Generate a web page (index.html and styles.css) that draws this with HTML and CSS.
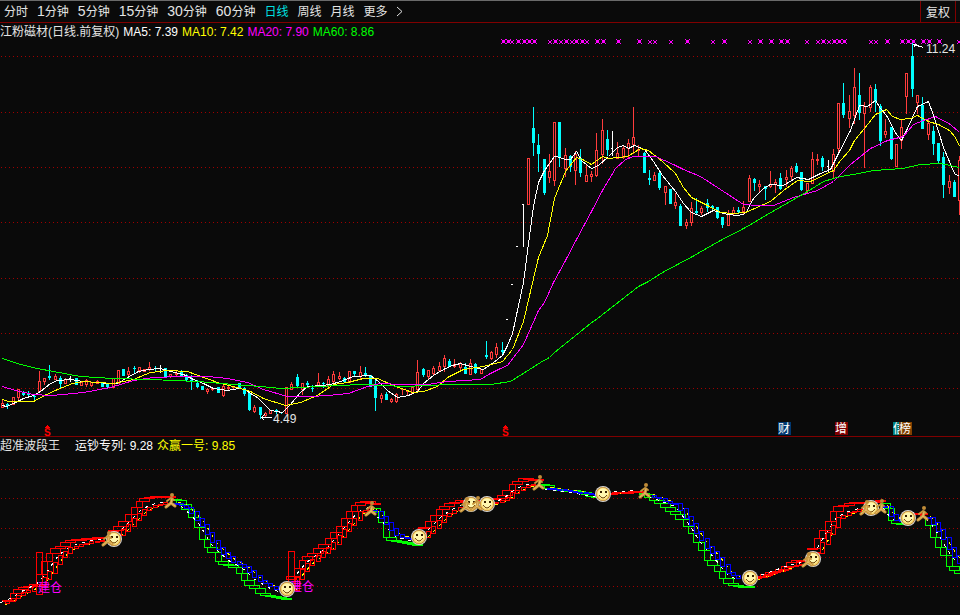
FILE: index.html
```html
<!DOCTYPE html>
<html lang="zh">
  <head>
    <meta charset="utf-8">
    <title>江粉磁材 日线</title>
    <link rel="stylesheet" href="styles.css">
  </head>
  <body>
    <header class="toolbar">
      <nav class="periods">
        <button>分时</button>
        <button><span class="num">1</span>分钟</button>
        <button><span class="num">5</span>分钟</button>
        <button><span class="num">15</span>分钟</button>
        <button><span class="num">30</span>分钟</button>
        <button><span class="num">60</span>分钟</button>
        <button class="active">日线</button>
        <button>周线</button>
        <button>月线</button>
        <button>更多</button>
        <button class="more" aria-label="展开"><svg width="7" height="11" viewBox="0 0 7 11"><path d="M1 1l5 4.500l-5 4.500"/></svg></button>
      </nav>
      <button class="adjust">复权</button>
    </header>

    <section class="panel main">
      <div class="legend">
        <span>江粉磁材(日线.前复权)</span>
        <span class="ma5">MA5: 7.39</span>
        <span class="ma10">MA10: 7.42</span>
        <span class="ma20">MA20: 7.90</span>
        <span class="ma60">MA60: 8.86</span>
      </div>
      <svg class="chart" id="price" viewBox="0 39 960 397" role="img" aria-label="日线"></svg>
    </section>

    <section class="panel">
      <div class="legend">
        <span class="title">超准波段王</span>
        <span class="ma5">运钞专列: 9.28</span>
        <span class="ma10">众赢一号: 9.85</span>
      </div>
      <svg class="chart" id="wave" viewBox="0 453 960 162" role="img" aria-label="超准波段王"></svg>
    </section>

    <script src="chart.js"></script>
  </body>
</html>
```
FILE: styles.css
```css
* {
    box-sizing: border-box;
}
body {
    margin: 0;
    background: #0a0a0a;
    color: #e4e4e4;
    font-family: "Liberation Sans", "Noto Sans CJK SC", sans-serif;
    font-size: 12px;
    overflow-x: hidden;
}
button {
    background: none;
    border: 0;
    padding: 0;
    color: inherit;
    font: inherit;
    white-space: nowrap;
    cursor: pointer;
}
.toolbar {
    display: flex;
    justify-content: space-between;
    height: 23px;
    border-top: 1px solid #6a6a6a;
    border-bottom: 1px solid #800000;
}
.periods {
    display: flex;
    align-items: center;
    gap: 9px;
    padding-left: 4px;
}
.periods button {
    line-height: 20px;
}
.num {
    font-size: 14px;
}
.active {
    color: #00e0e0;
}
.more svg {
    display: block;
    fill: none;
    stroke: #e4e4e4;
}
.adjust {
    width: 36px;
    margin-right: 4px;
    border-left: 1px solid #800000;
    border-right: 1px solid #800000;
}
.main {
    border-bottom: 1px solid #800000;
}
.legend {
    display: flex;
    gap: 4px;
    height: 16px;
    line-height: 18px;
    white-space: nowrap;
}
.title {
    margin-right: 11px;
}
.chart {
    display: block;
    width: 100%;
    height: auto;
    overflow: visible;
}
.ma5 { color: #ffffff; }
.ma10 { color: #ffff00; }
.ma20 { color: #ff00ff; }
.ma60 { color: #00ff00; }

.grid {
    stroke: #a00000;
    stroke-dasharray: 1 3;
}
.line {
    fill: none;
    stroke: currentColor;
    stroke-width: 1;
    shape-rendering: crispEdges;
}
.dash {
    stroke-dasharray: 3 5;
}
.up { color: #ff3c3c; }
.down { color: #00ffff; }
.flat { color: #ffffff; }
.wick, .solid, .mark {
    fill: currentColor;
    shape-rendering: crispEdges;
}
.hollow {
    fill: #0a0a0a;
    stroke: currentColor;
    shape-rendering: crispEdges;
}
.red { color: #ff0000; }
.green { color: #00ff00; }
.blue { color: #0000ff; }
.label {
    fill: currentColor;
}
.dividend {
    fill: #ff0000;
    font-size: 10px;
    font-weight: bold;
}
.runner {
    fill: none;
    stroke: #c8963c;
    stroke-width: 3;
    stroke-linecap: round;
    stroke-linejoin: round;
}
.runner .shade {
    stroke: #e8bc6c;
    stroke-width: 1;
}
.runner circle {
    fill: #c08c38;
    stroke: none;
}
```
FILE: chart.js
```js
const NS = "http://www.w3.org/2000/svg";

function add(parent, tag, attrs, text){
    const el = document.createElementNS(NS, tag);
    for (const key in attrs) el.setAttribute(key, attrs[key]);
    if (text) el.textContent = text;
    parent.appendChild(el);
    return el;
}

// centre of bar i
function barX(i){
    return Math.floor(2.6 + 5.258 * i);
}

function grid(svg, rows){
    for (const y of rows) add(svg, "line", {class: "grid", x1: 1, x2: 960, y1: y + .5, y2: y + .5});
}

function line(svg, cls, points){
    const p = points.split(" ").map(s => s.split(",").map(v => +v + .5).join(",")).join(" ");
    return add(svg, "polyline", {class: "line " + cls, points: p});
}

// bars: high,open/close top,open/close bottom,low + u (up) d (down) f (flat)
const bars = `399,403,407,407u 403,404,405,408d 397,397,404,404u 389,389,397,400u 391,392,394,395d 391,394,394,395d 394,396,396,399d 371,381,391,391u 378,378,381,384u 365,376,377,379d
374,376,379,379u 376,378,383,387d 378,379,383,383u 376,378,378,381f 378,378,384,384d 382,382,385,385u 379,380,384,386u 382,382,385,386u 380,381,383,383u 382,382,386,386d
383,384,386,387d 378,378,387,387u 370,370,383,383u 369,369,375,375d 367,371,374,376u 366,368,368,372d 367,367,370,372u 369,369,371,371u 362,367,369,370u 366,368,368,371d
365,368,368,372f 368,368,376,376d 374,374,376,377u 371,373,374,376u 370,372,375,376d 374,375,379,381d 375,380,381,389d 380,383,386,387d 386,386,389,389d 388,389,391,393u
388,388,389,390u 387,387,392,392d 383,386,395,396u 385,387,388,389u 386,386,387,388u 383,383,387,388d 387,388,393,395d 393,393,409,410d 405,407,411,412u 407,407,414,418d
412,413,415,416u 410,410,413,413u 409,410,411,413d 412,412,412,413d 387,387,413,413u 382,384,389,389u 374,377,385,387d 383,383,389,394u 381,383,384,386d 385,388,388,391d
373,382,385,385u 382,383,383,387d 376,379,385,387u 371,374,381,382u 372,376,378,379u 377,378,381,381d 371,371,382,382u 371,371,373,375d 366,372,376,378u 367,373,375,376d
375,375,386,386d 380,386,397,410d 393,395,398,402u 392,394,399,399d 398,399,401,402u 393,394,401,402u 389,389,389,394u 390,391,391,395u 387,387,393,393u 360,372,389,390u
368,369,374,376d 370,370,376,379u 366,368,373,374u 362,366,370,371u 355,358,366,371u 359,361,366,366d 359,364,366,367u 362,363,367,369u 363,367,373,373d 359,363,374,374u
363,364,372,373d 369,369,373,373u 341,355,356,358d 351,352,358,359u 343,347,354,357u 342,350,351,353d 319,319,319,319f 284,284,284,284f 246,246,246,246f 204,204,204,246f
158,158,204,204u 107,128,142,155d 134,145,153,171d 159,159,192,194d 154,171,177,182u 122,122,180,185u 122,122,156,166d 148,155,168,176u 155,156,166,171d 151,154,170,184u
149,158,172,176d 165,175,181,181u 171,174,176,181u 133,150,175,176u 119,130,154,163u 130,139,149,155d 131,148,148,155f 142,153,158,158u 145,148,157,158u 139,143,148,157u
107,137,144,153u 145,149,150,155u 152,153,172,172d 170,178,179,184d 172,175,180,180u 172,173,187,189d 186,186,192,204u 189,189,203,203d 193,202,205,208u 204,206,225,225d
219,222,225,228u 202,208,222,225u 198,211,212,213d 206,208,212,214u 199,203,207,211d 205,206,207,210d 207,207,217,218d 217,217,224,227d 210,213,225,225u 207,210,213,214u
207,210,211,212d 201,207,211,213u 175,178,201,201u 178,179,182,190d 180,184,186,192u 186,186,188,199d 171,184,186,187u 179,182,184,192u 173,178,188,189d 170,177,179,186u
166,168,176,180u 163,166,171,172d 172,172,189,190d 183,183,190,193u 152,159,183,183u 154,159,160,164u 156,158,166,170d 160,166,166,172f 149,154,171,178u 103,103,148,153u
83,103,114,117d 95,111,118,127u 68,87,115,123u 73,95,112,119d 102,106,113,167u 85,87,107,111u 84,89,101,111d 104,106,140,145d 119,131,134,137u 127,127,158,159d
144,144,166,166u 120,127,140,148u 73,73,96,113u 43,56,88,96d 95,95,102,113u 97,105,128,128d 118,123,134,139u 126,131,143,154d 143,143,160,163d 152,157,184,197d
175,181,187,193u 180,182,196,196d 156,160,200,214u`.split(/\s+/);

const ma5 = "2,405 6,406 13,403 23,398 33,395 40,391 50,383 57,380 70,379 83,381 97,382 107,383 117,383 127,377 138,371 148,369 160,368 170,371 183,374 193,379 203,383 213,388 227,390 238,388 245,389 250,393 257,397 270,410 282,412 290,404 300,392 307,386 322,385 330,384 340,381 353,376 370,375 378,381 387,390 397,397 408,395 417,391 423,383 433,375 443,369 452,365 460,363 470,366 483,369 493,362 502,355 507,345 512,333 523,282 528,243 533,206 538,182 544,170 554,156 556,156 565,159 570,159 576,151 582,161 591,168 598,165 608,156 617,147 623,145 628,148 634,145 644,149 653,161 662,175 675,191 683,203 691,212 701,216 713,210 720,212 727,214 738,215 745,213 753,198 763,188 770,184 783,185 796,177 808,179 820,173 830,169 838,153 850,130 859,105 867,106 875,100 880,108 886,115 896,134 901,140 907,128 917,106 928,101 933,115 943,147 954,173 959,176";
const ma10 = "2,399 8,401 33,401 44,395 57,389 72,383 83,381 113,383 133,379 150,372 167,370 187,371 203,377 220,383 237,387 250,391 263,398 285,405 300,402 317,395 333,384 347,382 363,378 377,378 393,385 412,392 423,391 437,386 447,377 463,369 483,366 502,361 512,349 523,321 533,278 538,257 547,235 554,198 565,171 576,157 582,159 591,164 602,156 608,158 627,156 640,148 648,150 662,161 675,173 683,187 691,197 707,205 720,212 732,213 745,212 770,201 783,190 797,180 810,181 833,170 840,160 849,150 854,140 864,128 875,114 886,109 892,116 900,119 910,118 917,115 928,121 938,124 949,130 955,137 959,146";
const ma20 = "2,386 15,390 33,394 50,395 63,394 83,392 110,387 133,380 153,377 180,376 207,376 227,378 247,382 263,389 287,396 310,396 327,395 348,393 367,386 380,383 400,384 427,384 447,381 480,379 490,373 498,369 507,365 523,344 538,310 544,302 553,282 565,260 576,239 591,211 602,190 615,168 625,159 633,156 655,156 673,164 683,169 700,176 720,189 743,204 757,205 773,205 793,197 817,190 833,181 850,164 870,148 887,140 903,136 913,124 923,120 935,116 950,124 959,132";
const ma60 = "2,358 20,364 37,368 53,371 80,376 113,378 150,379 197,381 233,384 260,386 280,388 300,387 337,385 363,384 403,386 450,384 490,384 510,381 529,369 540,362 549,357 554,352 590,323 597,318 638,286 648,281 662,272 692,256 720,240 745,227 767,214 807,191 823,181 840,176 853,174 873,170 902,168 920,164 940,163 959,167";

function drawBars(svg){
    bars.forEach((bar, i) => {
        const [high, top, bottom, low] = bar.slice(0, -1).split(",").map(Number);
        const kind = {u: "up", d: "down", f: "flat"}[bar.slice(-1)];
        const x = barX(i);
        const g = add(svg, "g", {class: kind});
        add(g, "rect", {class: "wick", x: x, y: high, width: 1, height: low - high + 1});
        if (kind == "up" && bottom - top > 1)
            add(g, "rect", {class: "hollow", x: x - .5, y: top + .5, width: 2, height: bottom - top});
        else if (kind == "flat")
            add(g, "rect", {class: "solid", x: x - 1, y: top, width: 2, height: 1});
        else
            add(g, "rect", {class: "solid", x: x - 1, y: top, width: 3, height: bottom - top + 1});
    });
}

// crosses along the top edge, the strong ones have a filled centre
function drawCrosses(svg){
    const strong = [503, 508, 518, 524, 529, 534, 555, 566, 576, 582, 597, 603, 618, 639, 687, 724, 760, 771, 781, 787, 823, 834, 839, 844, 887, 902, 908, 913, 923, 929, 939];
    const weak = [512, 550, 561, 572, 587, 650, 655, 671, 713, 750, 807, 818, 829, 871, 876, 959];
    const dot = (x, y, w, h) => add(svg, "rect", {class: "mark ma20", x: x, y: y, width: w, height: h});
    for (const x of strong){
        for (const y of [39, 43]){
            dot(x - 2, y, 1, 1);
            dot(x + 2, y, 1, 1);
        }
        dot(x - 1, 40, 3, 3);
    }
    for (const x of weak){
        for (const y of [40, 43]){
            dot(x - 2, y, 1, 1);
            dot(x + 1, y, 1, 1);
        }
        dot(x - 1, 41, 2, 2);
    }
}

function badge(svg, x, color, text){
    add(svg, "rect", {x: x, y: 422, width: 13, height: 13, fill: color});
    add(svg, "text", {class: "label flat", x: x, y: 433}, text);
}

function dividend(svg, x){
    add(svg, "text", {class: "dividend", x: x - 3, y: 436}, "S");
    add(svg, "path", {class: "mark red", d: `M${x - 2} 428v-1h1v-1h1v-1h1v1h1v1h1v1z`});
}

const price = document.getElementById("price");
grid(price, [56, 112, 167, 222, 278, 333, 388]);
drawBars(price);
line(price, "ma5", ma5);
line(price, "ma10", ma10);
line(price, "ma20", ma20);
line(price, "ma60", ma60);
drawCrosses(price);
line(price, "flat", "271,417 261,417 264,414");
line(price, "flat", "261,417 264,420");
line(price, "flat", "923,47 913,44 916,44");
line(price, "flat", "913,44 915,47");
add(price, "text", {class: "label", x: 273, y: 423}, "4.49");
add(price, "text", {class: "label", x: 926, y: 53}, "11.24");
dividend(price, 47);
dividend(price, 505);
badge(price, 778, "#003870", "财");
badge(price, 835, "#800000", "增");
badge(price, 893, "#008080", "信");
badge(price, 899, "#804000", "榜");

// wave legs: outer and inner curve of each leg
const legs = [
    ["red", "2,601 8,600 14,592 20,588 30,586 36,583 42,565 46,557 52,549 60,546 66,541 75,539 90,538 103,537",
        "2,603 10,600 18,595 25,591 33,587 40,583 47,575 52,567 60,556 70,548 80,544 93,541 103,540"],
    ["red", "112,531 117,527 121,523 125,518 131,510 138,502 145,497 155,496 171,496",
        "117,535 123,530 133,520 143,510 153,505 167,502"],
    ["green", "172,499 178,501 185,507 190,516 195,522 200,535 205,545 211,550 216,560 222,564 232,566 237,570 242,577 247,584 253,587 258,592 263,595 275,597 285,599",
        "175,503 183,505 192,513 200,522 207,533 213,543 222,552 230,559 238,563 247,569 255,577 263,582 272,587 280,590"],
    ["red", "287,579 295,572 300,562 305,557 312,553 318,548 325,542 332,533 338,527 345,517 352,507 358,502 367,501 373,504",
        "292,589 295,583 298,575 308,563 320,554 330,547 340,535 350,523 360,512 372,507"],
    ["green", "372,508 378,514 382,525 384,535 390,540 400,542 415,544",
        "373,510 382,518 390,528 397,535 407,538 415,540"],
    ["red", "422,528 430,518 438,510 447,504 460,500 474,500",
        "424,536 427,533 433,527 443,517 453,510 463,506"],
    ["red", "492,499 497,498 502,495 507,490 513,483 523,478 533,479 540,481",
        "492,503 497,502 505,499 512,493 522,487 533,484"],
    ["green", "543,484 550,489 577,491 590,496 597,497", "547,488 567,490 583,493 597,495"],
    ["red", "608,493 640,491", "608,493 640,491"],
    ["green", "642,493 650,498 660,503 667,509 677,515 682,522 688,528 695,540 703,553 708,562 715,568 722,578 728,583 737,586 750,587",
        "650,495 663,500 677,505 683,513 692,525 700,538 707,547 712,552 720,562 728,572 740,579"],
    ["red", "755,577 767,573 777,570 787,566 793,560 803,560", "755,578 773,572 787,567 803,563"],
    ["red", "811,549 815,543 818,535 825,527 830,517 835,507 843,505 853,502 863,502 882,500",
        "815,555 817,552 822,543 830,530 838,518 847,513 860,509 868,507"],
    ["green", "882,503 887,512 892,522 900,523", "884,506 887,510 893,517 901,521"],
    ["red", "912,514 920,513", "912,513 920,514"],
    ["green", "925,518 929,527 933,537 938,547 945,558 950,568 960,573",
        "927,517 933,523 940,533 948,547 957,560 960,563"],
];

function parse(curve){
    return curve.split(" ").map(p => p.split(",").map(Number));
}

function valueAt(pts, x){
    for (let k = 1; k < pts.length; k++){
        const [x0, y0] = pts[k - 1], [x1, y1] = pts[k];
        if (x <= x1) return Math.round(y0 + (y1 - y0) * Math.max(0, x - x0) / (x1 - x0));
    }
    return pts[pts.length - 1][1];
}

// one box per bar, from the last value to this one
function boxes(svg, cls, pts, wide){
    for (let i = 1; i < 184; i++){
        const x = barX(i);
        if (x <= pts[0][0] || x > pts[pts.length - 1][0] + 2) continue;
        const a = valueAt(pts, barX(i - 1)), b = valueAt(pts, x);
        let h = Math.abs(a - b);
        let y = Math.min(a, b);
        const w = wide ? (h > 5 ? 6 : 10) : 4;
        if (!wide && h > 3){
            y -= 1;
            h += 2;
        }
        add(svg, "rect", {class: "line " + cls, x: x - w / 2 + .5, y: y + .5, width: w, height: Math.max(h, 1)});
    }
}

function smile(svg, x, y){
    const g = add(svg, "g", {transform: `translate(${x} ${y})`});
    add(g, "circle", {r: 8, fill: "#d8d8d4"});
    add(g, "circle", {r: 7, fill: "#a86c20"});
    add(g, "circle", {r: 6.500, fill: "#f8d468"});
    add(g, "circle", {cy: -.5, r: 5.200, fill: "#fff8b0"});
    add(g, "path", {d: "M-3-3h2v2h-2zM2-3h2v2h-2z", fill: "#382000"});
    add(g, "path", {d: "M-4 1q4 6 8 0", fill: "none", stroke: "#704000"});
}

function runner(svg, x, y){
    const g = add(svg, "g", {class: "runner", transform: `translate(${x} ${y})`});
    add(g, "path", {d: "M1-2l-1 4l-5 4M0 2l4 3"});
    add(g, "path", {d: "M-4 0l4-3l3 2", "stroke-width": 2});
    add(g, "path", {class: "shade", d: "M1-2l-1 4l-5 4M0 2l4 3"});
    add(g, "circle", {cx: 1, cy: -6, r: 2});
}

const wave = document.getElementById("wave");
grid(wave, [469, 498, 528, 557, 586]);
for (const [color, outer, inner] of legs){
    const o = parse(outer), n = parse(inner);
    const red = color == "red";
    boxes(wave, color, o, true);
    line(wave, "dash flat", n.map(([x, y]) => [x - 2, y + (red ? -1 : 1)].join(",")).join(" "));
    line(wave, "dash ma10", n.map(([x, y]) => [x + 3, y + (red ? 1 : -1)].join(",")).join(" "));
    boxes(wave, red ? "red" : "blue", n, false);
}
add(wave, "rect", {class: "line red", x: 36.500, y: 552.500, width: 6, height: 42});
add(wave, "rect", {class: "line red", x: 288.500, y: 551.500, width: 6, height: 38});
add(wave, "text", {class: "label ma20", x: 38, y: 592}, "建仓");
add(wave, "text", {class: "label ma20", x: 290, y: 591}, "建仓");
for (const [x, y] of [[114, 539], [287, 589], [419, 537], [471, 504], [487, 504], [603, 494], [750, 578], [813, 559], [871, 508], [908, 518]]) smile(wave, x, y);
for (const [x, y] of [[108, 539], [171, 501], [371, 509], [466, 505], [477, 504], [539, 483], [645, 491], [808, 560], [866, 508], [881, 507], [923, 514]]) runner(wave, x, y);
```
